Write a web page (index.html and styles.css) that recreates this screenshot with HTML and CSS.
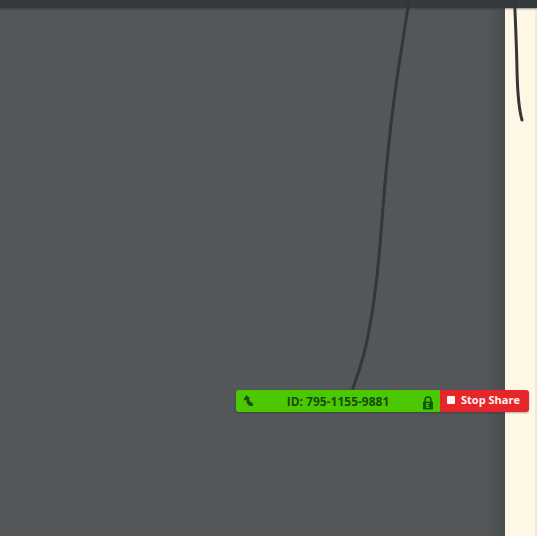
FILE: index.html
```html
<!DOCTYPE html>
<html lang="en">
<head>
<meta charset="utf-8">
<title>Screen share</title>
<link rel="stylesheet" href="styles.css">
</head>
<body>
<div class="app">
  <div class="topbar"></div>
  <div class="workspace">
    <div class="backdrop"></div>
    <div class="paper"></div>
  </div>
  <svg class="ink" width="537" height="536" viewBox="0 0 537 536" aria-hidden="true">
    <path class="stroke-back" d="M409 0C405 28 399 62 394 100C389 138 385 180 382 220C379 262 375 298 370 325C366 350 359 372 353 388"/>
    <path class="stroke-back" d="M514.500 0C515.500 22 516.500 45 517 70C517.500 92 518.500 108 522 120"/>
  </svg>
  <div class="meeting-bar">
    <div class="meeting-info">
      <svg class="pin" width="12" height="12" viewBox="0 0 12 12" aria-hidden="true">
        <path d="M4.500 0L8 3.500L6.800 4.200L8 6.500L11 8.500L11 11L7.500 11L5 8.500L4.200 5L1 5.500Z"/>
      </svg>
      <span class="meeting-id">ID: 795-1155-9881</span>
      <svg class="lock" width="12" height="14" viewBox="0 0 12 14" aria-hidden="true">
        <path class="shackle" d="M3 6V4a3 3 0 0 1 6 0V6"/>
        <rect class="body" x="1" y="5.500" width="10" height="8" rx="1"/>
        <path class="letter" d="M4.500 7.500H7.500M4.500 9.500H7M4.500 11.500H7.500M4.800 7.500V11.500"/>
      </svg>
    </div>
    <button class="stop-share" type="button"><span class="stop-icon"></span>Stop Share</button>
  </div>
</div>
</body>
</html>
```
FILE: styles.css
```css
* {
  box-sizing: border-box;
}

html,
body {
  margin: 0;
  height: 100%;
  overflow: hidden;
}

.app {
  position: relative;
  display: flex;
  flex-direction: column;
  width: 537px;
  height: 536px;
  background: #545759;
  font-family: "Open Sans", "Liberation Sans", sans-serif;
}

.topbar {
  flex: 0 0 8px;
  background: #363a3d;
  box-shadow: 0 1px 2px rgba(40, 43, 46, 0.5);
  z-index: 1;
}

.workspace {
  flex: 1;
  display: flex;
}

.backdrop {
  flex: 1;
  background: linear-gradient(to right, #545759 0, #545759 487px, #484c4f 100%);
}

.paper {
  flex: 0 0 32px;
  background: #fef7e6;
  border-right: 2px solid #f1eadb;
}

.ink {
  position: absolute;
  top: 0;
  left: 0;
  z-index: 2;
}

.stroke-back {
  fill: none;
  stroke: #343638;
  stroke-width: 3;
  stroke-linecap: round;
}

.meeting-bar {
  position: absolute;
  top: 390px;
  left: 236px;
  z-index: 3;
  display: flex;
  width: 293px;
  height: 22px;
  border-radius: 3px;
  overflow: hidden;
  box-shadow: 0 1px 2px rgba(30, 30, 30, 0.35);
}

.meeting-info {
  flex: 0 0 204px;
  display: flex;
  align-items: center;
  padding: 0 6px 0 6px;
  background: #4bc800;
}

.pin {
  flex: none;
  fill: #14540a;
}

.meeting-id {
  flex: 1;
  color: #1a4a10;
  font-size: 12px;
  font-weight: 700;
  text-align: center;
  white-space: nowrap;
}

.lock {
  flex: none;
  margin-top: 3px;
}

.lock .shackle {
  fill: none;
  stroke: #0f5a0a;
  stroke-width: 1.500;
}

.lock .body {
  fill: #0f5a0a;
}

.lock .letter {
  fill: none;
  stroke: #4bc800;
  stroke-width: 1;
}

.stop-share {
  flex: 1;
  display: flex;
  align-items: center;
  gap: 6px;
  margin: 0;
  padding: 0 0 3px 7px;
  border: 0;
  background: #e5262a;
  color: #fdf3f0;
  font-family: inherit;
  font-size: 11px;
  font-weight: 700;
  white-space: nowrap;
}

.stop-icon {
  flex: none;
  width: 8px;
  height: 8px;
  border-radius: 1px;
  background: #fff6f4;
}
```
